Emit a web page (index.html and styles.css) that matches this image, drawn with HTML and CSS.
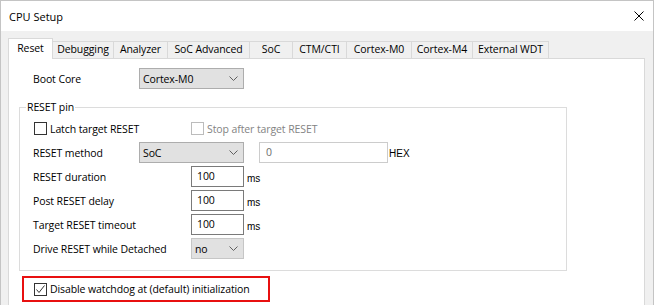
FILE: index.html
```html
<!DOCTYPE html>
<html lang="en">
<head>
    <meta charset="UTF-8">
    <title>CPU Setup</title>
    <link rel="stylesheet" href="styles.css">
</head>
<body>
    <div class="window">
        <div class="titlebar">
            <span class="title">CPU Setup</span>
            <svg class="close" width="10" height="10" viewBox="0 0 10 10">
                <path d="M0.5 0.5L9.5 9.5M9.5 0.5L0.5 9.5" stroke="#000" stroke-width="1" fill="none"/>
            </svg>
        </div>

        <div class="tabs">
            <div class="tab active">Reset</div>
            <div class="tab">Debugging</div>
            <div class="tab">Analyzer</div>
            <div class="tab">SoC Advanced</div>
            <div class="tab">SoC</div>
            <div class="tab">CTM/CTI</div>
            <div class="tab">Cortex-M0</div>
            <div class="tab">Cortex-M4</div>
            <div class="tab">External WDT</div>
        </div>

        <div class="panel">
            <div class="row boot-row">
                <span class="label">Boot Core</span>
                <div class="combo">
                    <span>Cortex-M0</span>
                    <svg width="9" height="5" viewBox="0 0 9 5"><path d="M0.5 0.5L4.5 4.5L8.5 0.5" stroke="#606060" fill="none"/></svg>
                </div>
            </div>

            <fieldset class="group">
                <legend>RESET pin</legend>

                <div class="row check-row">
                    <label class="check latch">
                        <span class="box"></span>
                        Latch target RESET
                    </label>
                    <label class="check disabled">
                        <span class="box"></span>
                        Stop after target RESET
                    </label>
                </div>

                <div class="row">
                    <span class="label">RESET method</span>
                    <div class="combo">
                        <span>SoC</span>
                        <svg width="9" height="5" viewBox="0 0 9 5"><path d="M0.5 0.5L4.5 4.5L8.5 0.5" stroke="#606060" fill="none"/></svg>
                    </div>
                    <div class="edit edit-hex disabled">0</div>
                    <span class="unit">HEX</span>
                </div>

                <div class="row">
                    <span class="label label-wide">RESET duration</span>
                    <div class="edit">100</div>
                    <span class="unit">ms</span>
                </div>

                <div class="row">
                    <span class="label label-wide">Post RESET delay</span>
                    <div class="edit">100</div>
                    <span class="unit">ms</span>
                </div>

                <div class="row">
                    <span class="label label-wide">Target RESET timeout</span>
                    <div class="edit">100</div>
                    <span class="unit">ms</span>
                </div>

                <div class="row">
                    <span class="label label-wide">Drive RESET while Detached</span>
                    <div class="combo combo-small">
                        <span>no</span>
                        <svg width="9" height="5" viewBox="0 0 9 5"><path d="M0.5 0.5L4.5 4.5L8.5 0.5" stroke="#606060" fill="none"/></svg>
                    </div>
                </div>
            </fieldset>

            <div class="highlight">
                <label class="check">
                    <span class="box checked">
                        <svg width="11" height="11" viewBox="0 0 11 11"><path d="M1.5 5.5L4 8.5L9.5 1.5" stroke="#333" stroke-width="1" fill="none"/></svg>
                    </span>
                    Disable watchdog at (default) initialization
                </label>
            </div>
        </div>
    </div>
</body>
</html>
```

FILE: styles.css
```css
* {
    margin: 0;
    padding: 0;
    box-sizing: border-box;
}

body {
    font-family: 'Open Sans', 'Noto Sans', sans-serif;
    font-size: 10.5px;
    letter-spacing: -0.1px;
    color: #000;
    background: #fff;
}

.window {
    width: 654px;
    height: 305px;
    overflow: hidden;
    background: #f0f0f0;
    border: 1px solid #c4c4c4;
    border-bottom: none;
}

.titlebar {
    height: 30px;
    background: #fff;
    display: flex;
    align-items: center;
    justify-content: space-between;
    padding: 0 9px 0 8px;
}

.title {
    font-size: 11px;
    letter-spacing: 0;
}

/* tab strip */
.tabs {
    display: flex;
    align-items: flex-end;
    height: 20px;
    margin-top: 7px;
    padding-left: 7px;
}

.tab {
    height: 17px;
    line-height: 15px;
    text-align: center;
    white-space: nowrap;
    background: #f0f0f0;
    border: 1px solid #d9d9d9;
    border-bottom: none;
    margin-left: -1px;
}

.tab:first-child { margin-left: 0; }

.tab:nth-child(1) { width: 45px; }
.tab:nth-child(2) { width: 62px; }
.tab:nth-child(3) { width: 55px; }
.tab:nth-child(4) { width: 83px; }
.tab:nth-child(5) { width: 44px; }
.tab:nth-child(6) { width: 55px; }
.tab:nth-child(7) { width: 66px; }
.tab:nth-child(8) { width: 62px; }
.tab:nth-child(9) { width: 77px; }

.tab.active {
    position: relative;
    z-index: 1;
    height: 21px;
    margin-bottom: -1px;
    padding-top: 2px;
    background: #fff;
}

.panel {
    height: 260px;
    margin: 0 8px 0 7px;
    background: #fff;
    border: 1px solid #d9d9d9;
}

/* rows and controls */
.row {
    display: flex;
    align-items: center;
    height: 21px;
    padding-left: 13px;
}

.boot-row {
    margin-top: 9px;
    padding-left: 24px;
}

.label {
    width: 106px;
    flex: none;
}

.label-wide {
    width: 158px;
}

.combo {
    width: 105px;
    height: 21px;
    display: flex;
    align-items: center;
    justify-content: space-between;
    padding: 0 5px 0 3px;
    background: #e1e1e1;
    border: 1px solid #adadad;
}

.combo-small {
    width: 53px;
    border-color: #c6c6c6;
}

.edit {
    width: 53px;
    height: 21px;
    line-height: 19px;
    padding-left: 5px;
    background: #fff;
    border: 1px solid #7a7a7a;
}

.edit.disabled {
    color: #6d6d6d;
    border-color: #cccccc;
}

.edit-hex {
    width: 129px;
    margin-left: 15px;
    padding-left: 6px;
}

.unit {
    font-family: 'Liberation Sans', Arial, sans-serif;
    font-size: 10px;
    letter-spacing: 0;
    margin-left: 3px;
    padding-top: 4px;
}

.edit-hex + .unit {
    margin-left: 1px;
    padding-top: 1px;
}

/* group box */
.group {
    width: 548px;
    margin: 10px 0 0 10px;
    padding: 0 0 11px 0;
    border: 1px solid #dcdcdc;
    display: flex;
    flex-direction: column;
    gap: 3px;
}

.group legend {
    margin-left: 6px;
    padding: 0 1px;
    line-height: 16px;
}

.check-row {
    margin-top: 3px;
}

/* checkboxes */
.check {
    display: flex;
    align-items: center;
    gap: 3px;
    white-space: nowrap;
}

.check.latch {
    width: 157px;
    margin-left: 1px;
}

.check.disabled {
    color: #838383;
}

.box {
    width: 13px;
    height: 13px;
    flex: none;
    display: flex;
    align-items: center;
    justify-content: center;
    background: #fff;
    border: 1px solid #333;
}

.check.disabled .box {
    border-color: #bcbcbc;
}

.highlight {
    width: 248px;
    height: 26px;
    margin: 5px 0 0 13px;
    padding-left: 10px;
    display: flex;
    align-items: center;
    border: 2px solid #e81010;
}
```
